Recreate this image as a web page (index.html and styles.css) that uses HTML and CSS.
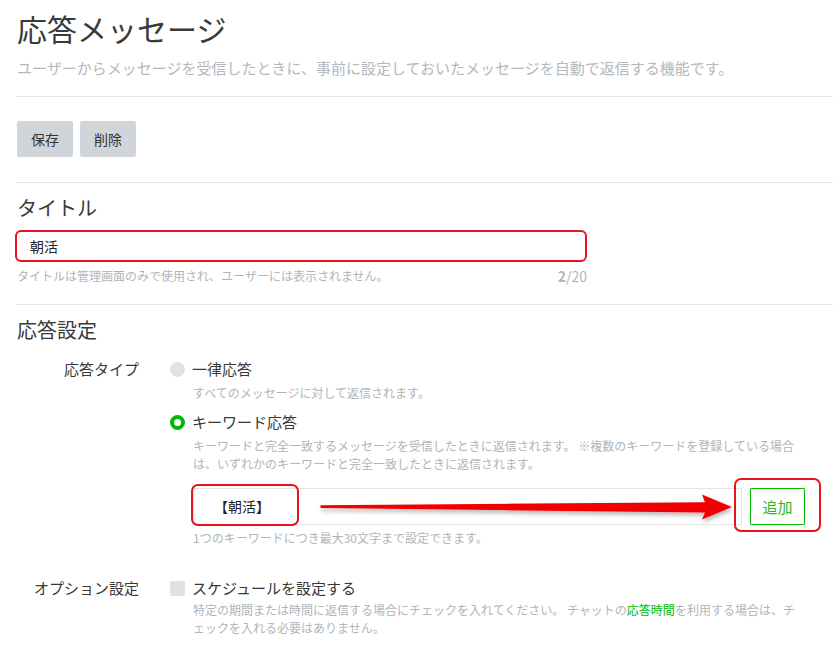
FILE: index.html
```html
<!DOCTYPE html>
<html lang="ja">
<head>
  <meta charset="UTF-8">
  <meta name="viewport" content="width=device-width, initial-scale=1.0">
  <title>応答メッセージ</title>
  <link rel="stylesheet" href="styles.css">
</head>
<body>
  <div class="page">
    <header class="page-head">
      <h1>応答メッセージ</h1>
      <p class="lead">ユーザーからメッセージを受信したときに、事前に設定しておいたメッセージを自動で返信する機能です。</p>
    </header>

    <div class="actions">
      <button class="btn">保存</button>
      <button class="btn">削除</button>
    </div>

    <!-- Title -->
    <section class="section first">
      <h2>タイトル</h2>
      <div class="field">
        <div class="text-input marked">朝活</div>
        <div class="field-foot">
          <span class="hint">タイトルは管理画面のみで使用され、ユーザーには表示されません。</span>
          <span class="count"><b>2</b>/20</span>
        </div>
      </div>
    </section>

    <!-- Response settings -->
    <section class="section">
      <h2>応答設定</h2>

      <div class="form-row type-row">
        <div class="row-label">応答タイプ</div>
        <div class="row-body">
          <div class="choice">
            <span class="radio"></span>
            <span>一律応答</span>
          </div>
          <p class="desc">すべてのメッセージに対して返信されます。</p>

          <div class="choice second">
            <span class="radio checked"></span>
            <span>キーワード応答</span>
          </div>
          <p class="desc">キーワードと完全一致するメッセージを受信したときに返信されます。 ※複数のキーワードを登録している場合<br>は、いずれかのキーワードと完全一致したときに返信されます。</p>

          <div class="keyword-row">
            <div class="keyword-input">【朝活】</div>
            <div class="add-wrap">
              <button class="btn-add">追加</button>
              <span class="mark-box add-mark"></span>
            </div>
            <span class="mark-box keyword-mark"></span>
            <svg class="arrow" width="549" height="37" viewBox="0 0 549 37">
              <defs>
                <filter id="shade" x="-5%" y="-50%" width="110%" height="200%">
                  <feDropShadow dx="1" dy="3" stdDeviation="2" flood-color="#000" flood-opacity="0.28"/>
                </filter>
              </defs>
              <path d="M128,17.2 L512,14.2 L509,6.5 L539,19 L509,31.5 L512,24.6 L128,20 Q126.5,18.6 128,17.2 Z" fill="#f00000" filter="url(#shade)"/>
            </svg>
          </div>
          <p class="desc">1つのキーワードにつき最大30文字まで設定できます。</p>
        </div>
      </div>

      <div class="form-row option-row">
        <div class="row-label">オプション設定</div>
        <div class="row-body">
          <div class="choice">
            <span class="check"></span>
            <span>スケジュールを設定する</span>
          </div>
          <p class="desc small-gap">特定の期間または時間に返信する場合にチェックを入れてください。 チャットの<span class="green">応答時間</span>を利用する場合は、チ<br>ェックを入れる必要はありません。</p>
        </div>
      </div>
    </section>
  </div>
</body>
</html>
```

FILE: styles.css
```css
body {
  margin: 0;
  background: #fff;
  color: #383838;
  font-family: "Noto Sans CJK JP", "Noto Sans", sans-serif;
  overflow: hidden;
}

.page {
  padding: 8px 0 0 17px;
}

.page-head {
  padding-bottom: 17px;
  border-bottom: 1px solid #e3e5e7;
}

h1 {
  margin: 0;
  font-size: 30px;
  line-height: 40px;
  font-weight: 400;
  color: #3a3a3a;
}

.lead {
  margin: 9px 0 0;
  font-size: 15px;
  line-height: 22px;
  color: #b3b8bd;
  white-space: nowrap;
}

.actions {
  display: flex;
  gap: 7px;
  padding: 24px 0 25px;
  border-bottom: 1px solid #e3e5e7;
}

.btn {
  width: 56px;
  height: 36px;
  padding: 0;
  border: none;
  border-radius: 2px;
  background: #d0d5da;
  color: #333;
  font-family: inherit;
  font-size: 14px;
}

.section {
  padding-top: 11px;
}

.section.first {
  padding-bottom: 19px;
  border-bottom: 1px solid #e3e5e7;
}

h2 {
  margin: 0;
  font-size: 20px;
  line-height: 28px;
  font-weight: 400;
  color: #3a3a3a;
}

.field {
  width: 570px;
}

.text-input {
  box-sizing: border-box;
  width: 572px;
  height: 32px;
  margin: 8px 0 0 -2px;
  padding: 0 13px;
  border: 1px solid #dcdfe2;
  border-radius: 4px;
  font-size: 14px;
  line-height: 30px;
  color: #222;
}

.text-input.marked {
  border: 2px solid #e5141d;
  border-radius: 6px;
  line-height: 28px;
}

.field-foot {
  display: flex;
  justify-content: space-between;
  margin-top: 5px;
  font-size: 12px;
  line-height: 18px;
  color: #b0b5ba;
}

.count {
  font-size: 14px;
}

.count b {
  font-weight: 700;
}

/* label / body rows */
.form-row {
  display: flex;
  gap: 31px;
}

.type-row {
  margin-top: 14px;
}

.option-row {
  margin-top: 30px;
}

.row-label {
  width: 122px;
  flex-shrink: 0;
  text-align: right;
  font-size: 15px;
  line-height: 22px;
}

.row-body {
  width: 640px;
}

.choice {
  display: flex;
  align-items: center;
  gap: 7px;
  font-size: 15px;
  line-height: 22px;
}

.choice.second {
  margin-top: 9px;
}

.radio {
  box-sizing: border-box;
  width: 15px;
  height: 15px;
  border-radius: 50%;
  background: #dfe2e5;
}

.radio.checked {
  border: 4.5px solid #00b900;
  background: #fff;
}

.check {
  width: 15px;
  height: 15px;
  border-radius: 2px;
  background: #dfe2e5;
}

.desc {
  margin: 4px 0 0 23px;
  font-size: 12px;
  line-height: 18px;
  color: #b0b5ba;
  white-space: nowrap;
}

.desc.small-gap {
  margin-top: 2px;
}

.green {
  color: #00b900;
}

.keyword-row {
  position: relative;
  display: flex;
  gap: 8px;
  margin: 15px 0 0 23px;
  height: 37px;
}

.keyword-input {
  box-sizing: border-box;
  flex-shrink: 0;
  width: 549px;
  height: 37px;
  padding-left: 20px;
  border: 1px solid #e3e5e7;
  font-size: 14px;
  line-height: 35px;
  color: #222;
}

.add-wrap {
  position: relative;
  flex-shrink: 0;
}

.btn-add {
  width: 55px;
  height: 37px;
  padding: 0;
  border: 1px solid #00b900;
  border-radius: 1px;
  background: #fff;
  color: #2fb52a;
  font-family: inherit;
  font-size: 15px;
}

/* red annotation marks */
.mark-box {
  position: absolute;
  box-sizing: border-box;
  border: 2px solid #e5141d;
  border-radius: 7px;
  pointer-events: none;
}

.keyword-mark {
  left: -2px;
  top: -4px;
  width: 108px;
  height: 42px;
}

.add-mark {
  left: -16px;
  top: -10px;
  width: 87px;
  height: 54px;
}

.arrow {
  position: absolute;
  left: 0;
  top: 0;
  overflow: visible;
  pointer-events: none;
}
```
